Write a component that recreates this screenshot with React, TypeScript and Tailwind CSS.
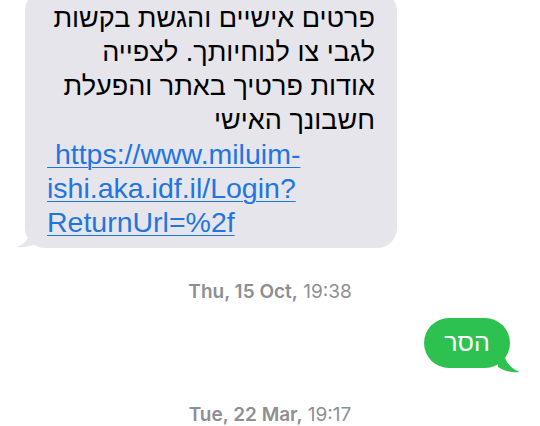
export default function App() {
  const hebrewLines = [
    "פרטים אישיים והגשת בקשות",
    "לגבי צו לנוחיותך. לצפייה",
    "אודות פרטיך באתר והפעלת",
    "חשבונך האישי",
  ];
  const linkLines = [" https://www.miluim-", "ishi.aka.idf.il/Login?", "ReturnUrl=%2f"];

  return (
    <div className="w-[540px] h-[426px] overflow-hidden bg-white font-['Liberation_Sans',Arial,sans-serif]">
      {/* received bubble */}
      <div className="relative ml-[25px] mt-[-9px] w-[372px]">
        <div className="rounded-[20px] bg-[#e6e5eb] pt-[10px] pb-[9px] pl-[22px] pr-[22px] text-[27px] leading-[34px] text-black">
          <div dir="rtl" className="text-right">
            {hebrewLines.map((l) => (
              <div key={l} className="whitespace-nowrap">{l}</div>
            ))}
          </div>
          <div dir="ltr" className="text-left text-[28.5px] text-[#1f76e0] underline decoration-1 underline-offset-[3px]">
            {linkLines.map((l) => (
              <div key={l} className="whitespace-pre">{l}</div>
            ))}
          </div>
        </div>
        <svg className="absolute left-[-8px] bottom-0" width="24" height="22" viewBox="0 0 24 22">
          <path d="M14 0 C14 10 10 17 0 21 C8 22 16 20 22 16 L24 0 Z" fill="#e6e5eb" />
        </svg>
      </div>

      <div className="mt-[34px] text-center text-[19px] leading-[20px] text-[#8e8e93] font-['Inter',sans-serif]">
        <span className="font-semibold">Thu, 15 Oct,</span> 19:38
      </div>

      {/* sent bubble */}
      <div className="mt-[16px] flex justify-end pr-[30px]">
        <div className="relative">
          <div dir="rtl" className="flex h-[50px] w-[86px] items-center justify-center rounded-[25px] bg-[#2dc250] text-[25px] text-white">
            הסר
          </div>
          <svg className="absolute right-[-10px] bottom-[-5px]" width="22" height="22" viewBox="0 0 22 22">
            <path d="M6 0 C6 10 12 17 22 21 C14 22 6 20 0 16 L0 0 Z" fill="#2dc250" />
          </svg>
        </div>
      </div>

      <div className="mt-[37px] text-center text-[19px] leading-[20px] text-[#8e8e93] font-['Inter',sans-serif]">
        <span className="font-semibold">Tue, 22 Mar,</span> 19:17
      </div>
    </div>
  );
}
